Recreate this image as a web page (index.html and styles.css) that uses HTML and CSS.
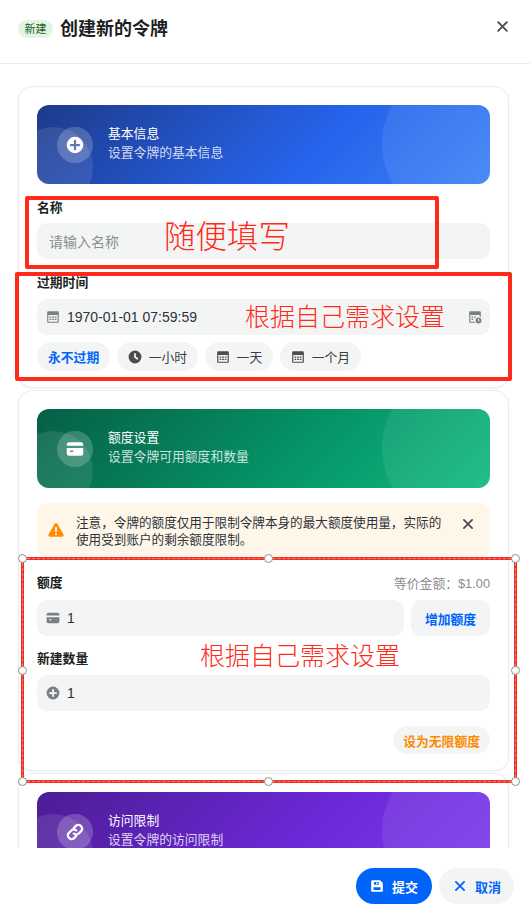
FILE: index.html
```html
<!DOCTYPE html>
<html lang="zh-CN">
<head>
<meta charset="utf-8">
<title>创建新的令牌</title>
<link rel="stylesheet" href="styles.css">
</head>
<body>
<svg class="sprites" width="0" height="0" aria-hidden="true">
  <defs>
    <symbol id="i-plus" viewBox="0 0 24 24"><path fill="currentColor" fill-rule="evenodd" d="M12 1a11 11 0 1 0 0 22 11 11 0 0 0 0-22Zm1.500 5.500a1.500 1.500 0 0 0-3 0v4h-4a1.500 1.500 0 0 0 0 3h4v4a1.500 1.500 0 0 0 3 0v-4h4a1.500 1.500 0 0 0 0-3h-4v-4Z"/></symbol>
    <symbol id="i-card" viewBox="0 0 24 24"><path fill="currentColor" fill-rule="evenodd" d="M4 3a3 3 0 0 0-3 3v1.500h22V6a3 3 0 0 0-3-3H4Zm19 7.500H1V18a3 3 0 0 0 3 3h16a3 3 0 0 0 3-3v-7.500ZM5 15a1 1 0 0 1 1-1h3a1 1 0 1 1 0 2H6a1 1 0 0 1-1-1Z"/></symbol>
    <symbol id="i-cal" viewBox="0 0 24 24"><path fill="currentColor" fill-rule="evenodd" d="M4 2a2 2 0 0 0-2 2v16a2 2 0 0 0 2 2h16a2 2 0 0 0 2-2V4a2 2 0 0 0-2-2H4Zm0 6.500h16V20H4V8.500ZM6 11h3v2.200H6V11Zm4.500 0h3v2.200h-3V11Zm4.500 0h3v2.200h-3V11ZM6 15h3v2.200H6V15Zm4.500 0h3v2.200h-3V15Zm4.500 0h3v2.200h-3V15Z"/></symbol>
    <symbol id="i-calclock" viewBox="0 0 24 24"><path fill="currentColor" fill-rule="evenodd" d="M4 2a2 2 0 0 0-2 2v16a2 2 0 0 0 2 2h8.500a7 7 0 0 1-.5-2H4V8.500h16V11a7 7 0 0 1 2 1V4a2 2 0 0 0-2-2H4Zm2 9h3v2.200H6V11Zm4.500 0h3v1.500a7 7 0 0 0-1 .7h-2V11ZM6 15h3v2.200H6V15Z"/><path fill="currentColor" fill-rule="evenodd" d="M18 13a5 5 0 1 0 0 10 5 5 0 0 0 0-10Zm.7 2.200h-1.400v3.100l2.300 1.500.7-1.100-1.600-1.100v-2.400Z"/></symbol>
    <symbol id="i-clock" viewBox="0 0 24 24"><path fill="currentColor" fill-rule="evenodd" d="M12 1a11 11 0 1 0 0 22 11 11 0 0 0 0-22Zm1.500 5.500a1.500 1.500 0 0 0-3 0V12c0 .5.200.9.600 1.200l4 3a1.500 1.500 0 0 0 1.800-2.400l-3.400-2.550V6.500Z"/></symbol>
    <symbol id="i-close" viewBox="0 0 24 24"><path fill="none" stroke="currentColor" stroke-width="3" stroke-linecap="round" d="M5 5l14 14M19 5 5 19"/></symbol>
    <symbol id="i-warn" viewBox="0 0 24 24"><path fill="currentColor" fill-rule="evenodd" d="M10.200 2.500a2.100 2.100 0 0 1 3.600 0l9.400 16.400a2.100 2.100 0 0 1-1.800 3.100H2.600a2.100 2.100 0 0 1-1.800-3.100l9.400-16.400ZM12 7.500a1.400 1.400 0 0 0-1.400 1.400v5.200a1.400 1.400 0 0 0 2.800 0V8.900A1.400 1.400 0 0 0 12 7.500Zm0 9.500a1.500 1.500 0 1 0 0 3 1.500 1.500 0 0 0 0-3Z"/></symbol>
    <symbol id="i-link" viewBox="0 0 24 24"><path fill="none" stroke="currentColor" stroke-width="3" stroke-linecap="round" d="M10.500 6.500l2.700-2.700a4.600 4.600 0 0 1 6.500 0l.5.500a4.600 4.600 0 0 1 0 6.500l-3.300 3.300a4.600 4.600 0 0 1-6.500 0M13.500 17.500l-2.700 2.700a4.600 4.600 0 0 1-6.500 0l-.5-.5a4.600 4.600 0 0 1 0-6.500l3.300-3.300a4.600 4.600 0 0 1 6.500 0"/></symbol>
    <symbol id="i-save" viewBox="0 0 24 24"><path fill="currentColor" fill-rule="evenodd" d="M4 2a2 2 0 0 0-2 2v16a2 2 0 0 0 2 2h16a2 2 0 0 0 2-2V7.800a2 2 0 0 0-.6-1.400l-3.800-3.800A2 2 0 0 0 16.200 2H4Zm3 3h8v5H7V5Zm3.500 1v3H13V6h-2.500ZM6 14h12v5H6v-5Z"/></symbol>
  </defs>
</svg>

<div class="modal">
  <header class="head">
    <span class="badge">新建</span>
    <h1 class="title">创建新的令牌</h1>
    <svg class="head-close"><use href="#i-close"/></svg>
  </header>

  <main class="body">
    <section class="card">
      <div class="banner blue">
        <span class="deco-left"></span><span class="deco-right"></span>
        <span class="banner-icon"><svg class="ico-18"><use href="#i-plus"/></svg></span>
        <div class="banner-text"><div class="banner-title">基本信息</div><div class="banner-sub">设置令牌的基本信息</div></div>
      </div>
      <div class="label name-label">名称</div>
      <div class="field"><span class="placeholder">请输入名称</span></div>
      <div class="label expire-label">过期时间</div>
      <div class="field">
        <svg class="ico-14 gray"><use href="#i-cal"/></svg>
        <span class="value">1970-01-01 07:59:59</span>
        <svg class="ico-14 gray end"><use href="#i-calclock"/></svg>
      </div>
      <div class="chips">
        <span class="chip link">永不过期</span>
        <span class="chip"><svg class="ico-14 dark"><use href="#i-clock"/></svg>一小时</span>
        <span class="chip"><svg class="ico-14 dark"><use href="#i-cal"/></svg>一天</span>
        <span class="chip"><svg class="ico-14 dark"><use href="#i-cal"/></svg>一个月</span>
      </div>
    </section>

    <section class="card">
      <div class="banner green">
        <span class="deco-left"></span><span class="deco-right"></span>
        <span class="banner-icon"><svg class="ico-18"><use href="#i-card"/></svg></span>
        <div class="banner-text"><div class="banner-title">额度设置</div><div class="banner-sub">设置令牌可用额度和数量</div></div>
      </div>
      <div class="alert">
        <svg class="alert-icon"><use href="#i-warn"/></svg>
        <p class="alert-text">注意，令牌的额度仅用于限制令牌本身的最大额度使用量，实际的使用受到账户的剩余额度限制。</p>
        <svg class="alert-close"><use href="#i-close"/></svg>
      </div>
      <div class="label-row"><span class="label">额度</span><span class="hint">等价金额：$1.00</span></div>
      <div class="field-row">
        <div class="field grow"><svg class="ico-14 gray"><use href="#i-card"/></svg><span class="value">1</span></div>
        <span class="side-btn link">增加额度</span>
      </div>
      <div class="label count-label">新建数量</div>
      <div class="field"><svg class="ico-14 gray"><use href="#i-plus"/></svg><span class="value">1</span></div>
      <div class="actions"><span class="chip orange">设为无限额度</span></div>
    </section>

    <section class="card">
      <div class="banner purple">
        <span class="deco-left"></span><span class="deco-right"></span>
        <span class="banner-icon"><svg class="ico-18"><use href="#i-link"/></svg></span>
        <div class="banner-text"><div class="banner-title">访问限制</div><div class="banner-sub">设置令牌的访问限制</div></div>
      </div>
    </section>
  </main>

  <footer class="foot">
    <span class="btn primary"><svg class="ico-14"><use href="#i-save"/></svg>提交</span>
    <span class="btn light"><svg class="ico-14"><use href="#i-close"/></svg>取消</span>
  </footer>

  <div class="mark mark-name"></div>
  <div class="note note-name">随便填写</div>
  <div class="mark mark-expire"></div>
  <div class="note note-expire">根据自己需求设置</div>
  <div class="select">
    <i class="handle h-tl"></i><i class="handle h-tc"></i><i class="handle h-tr"></i>
    <i class="handle h-ml"></i><i class="handle h-mr"></i>
    <i class="handle h-bl"></i><i class="handle h-bc"></i><i class="handle h-br"></i>
  </div>
  <div class="note note-quota">根据自己需求设置</div>
</div>
</body>
</html>
```
FILE: styles.css
```css
* { box-sizing: border-box; }
html, body { margin: 0; padding: 0; height: 100%; overflow: hidden; background: #fff; }
body { font-family: "Liberation Sans", "Noto Sans CJK SC", sans-serif; font-size: 12.8px; color: #1c1f23; }
.sprites { position: absolute; }
.modal { position: relative; height: 916px; display: flex; flex-direction: column; overflow: hidden; }

.head { height: 64px; flex: none; display: flex; align-items: center; padding: 0 20px 5px 18px; border-bottom: 1px solid #eceded; }
.badge { width: 35px; height: 18px; border-radius: 9px; background: #e4f4e3; color: #24601f; font-size: 11px; line-height: 18px; text-align: center; }
.title { margin: 0 0 0 7px; font-size: 18px; line-height: 24px; font-weight: 700; flex: 1; }
.head-close { width: 15px; height: 15px; color: #4a4c50; margin-top: -5px; }

.body { flex: 1; min-height: 0; overflow: hidden; padding: 22px 21px 0 18px; display: flex; flex-direction: column; gap: 2px; }
.card { flex: none; border: 1px solid #ebedef; border-radius: 14px; padding: 18px 18px 16px 18px; background: #fff; box-shadow: 0 1px 2px rgba(0,0,0,.05); }

.banner { position: relative; overflow: hidden; height: 79px; border-radius: 12px; display: flex; align-items: center; padding-left: 20px; color: #fff; }
.blue { background: linear-gradient(135deg, #1e3a8a 0%, #2563eb 60%, #3b82f6 100%); }
.green { background: linear-gradient(135deg, #065f46 0%, #059669 60%, #10b981 100%); }
.purple { background: linear-gradient(135deg, #4c1d95 0%, #6d28d9 60%, #7c3aed 100%); }
.deco-left { position: absolute; left: -24px; top: 22px; width: 80px; height: 80px; border-radius: 50%; background: rgba(255,255,255,.1); }
.deco-right { position: absolute; right: -52px; top: -41px; width: 160px; height: 160px; border-radius: 50%; background: rgba(255,255,255,.08); }
.banner-icon { position: relative; width: 36px; height: 36px; border-radius: 50%; background: rgba(255,255,255,.2); display: flex; align-items: center; justify-content: center; flex: none; color: #fff; }
.banner-text { position: relative; margin: -2px 0 0 15px; }
.banner-title { font-size: 12.8px; line-height: 18px; font-weight: 400; }
.banner-sub { font-size: 12.8px; line-height: 19px; color: rgba(255,255,255,.8); }

.ico-14 { width: 14px; height: 14px; flex: none; }
.ico-18 { width: 18px; height: 18px; }
.gray { color: #7b7e83; }
.dark { color: #4a4c50; }
.end { margin-left: auto; }

.label { font-size: 12.8px; line-height: 18px; font-weight: 600; }
.name-label { margin-top: 15px; margin-bottom: 6px; }
.expire-label { margin-top: 15px; margin-bottom: 7px; }
.count-label { margin-top: 14px; margin-bottom: 7px; }

.field { height: 36px; border-radius: 10px; background: #f3f5f5; display: flex; align-items: center; padding: 0 8px 0 9px; }
.grow { flex: 1; }
.placeholder { margin-left: 3px; font-size: 14px; color: #8a8d91; }
.value { margin-left: 7px; font-size: 14px; color: #2e3136; }

.chips { display: flex; gap: 7px; margin-top: 7px; }
.chip { height: 29px; border-radius: 15px; background: #f3f5f5; display: inline-flex; align-items: center; gap: 7px; padding: 0 10.500px 0 11px; font-size: 12.8px; color: #3a3d41; }
.link { color: #0064fa; font-weight: 600; }
.orange { height: 28px; color: #ff8a00; font-weight: 600; padding: 0 10px; }

.alert { margin-top: 15px; min-height: 55px; border-radius: 10px; background: #fff6ea; display: flex; align-items: flex-start; padding: 12px 14px 0 11px; }
.alert-icon { width: 16px; height: 16px; color: #ff8a00; flex: none; margin-top: 7px; }
.alert-text { margin: 0 0 0 12px; width: 372px; font-size: 12.6px; line-height: 17px; color: #2e3136; }
.alert-close { width: 14px; height: 14px; color: #4a4c50; flex: none; margin-left: 13px; margin-top: 2px; }

.label-row { display: flex; justify-content: space-between; align-items: center; margin-top: 15px; margin-bottom: 8px; }
.hint { font-size: 12.8px; color: #8a8d91; }
.field-row { display: flex; gap: 7px; }
.side-btn { width: 79px; height: 36px; border-radius: 10px; background: #f3f5f5; display: flex; align-items: center; justify-content: center; font-size: 12.8px; }
.actions { display: flex; justify-content: flex-end; margin-top: 15px; }

.foot { position: relative; flex: none; height: 68px; background: #fff; display: flex; justify-content: flex-end; gap: 7px; padding: 20px 16px 12px 0; }
.btn { height: 36px; border-radius: 18px; display: inline-flex; align-items: center; gap: 8px; padding: 0 14px; font-size: 13px; font-weight: 600; }
.primary { background: #0064fa; color: #fff; }
.light { background: #f3f5f5; color: #0064fa; padding-right: 13px; }

.mark { position: absolute; border: 4px solid #ff2a1a; border-radius: 2px; }
.mark-name { left: 25px; top: 196px; width: 414px; height: 73px; }
.mark-expire { left: 15px; top: 272px; width: 497px; height: 109px; }
.note { position: absolute; color: #ff2a1a; font-family: "Noto Sans CJK SC", sans-serif; white-space: nowrap; font-size: 25px; line-height: 32px; font-weight: 300; }
.note-name { left: 164px; top: 214px; font-size: 31.5px; line-height: 40px; }
.note-expire { left: 245px; top: 299px; }
.note-quota { left: 200px; top: 638px; }
.select { position: absolute; left: 21px; top: 557px; width: 496px; height: 226px; border: 3px solid #ff2a1a; outline: 1px dashed rgba(190,150,150,.9); outline-offset: -2px; }
.handle { position: absolute; width: 9px; height: 9px; border-radius: 50%; background: #fff; border: 1.5px solid #8f8f8f; }
.h-tl { left: -6px; top: -6px; } .h-tc { left: 239.5px; top: -6px; } .h-tr { right: -6px; top: -6px; }
.h-ml { left: -6px; top: 105.5px; } .h-mr { right: -6px; top: 105.5px; }
.h-bl { left: -6px; bottom: -6px; } .h-bc { left: 239.5px; bottom: -6px; } .h-br { right: -6px; bottom: -6px; }
```
